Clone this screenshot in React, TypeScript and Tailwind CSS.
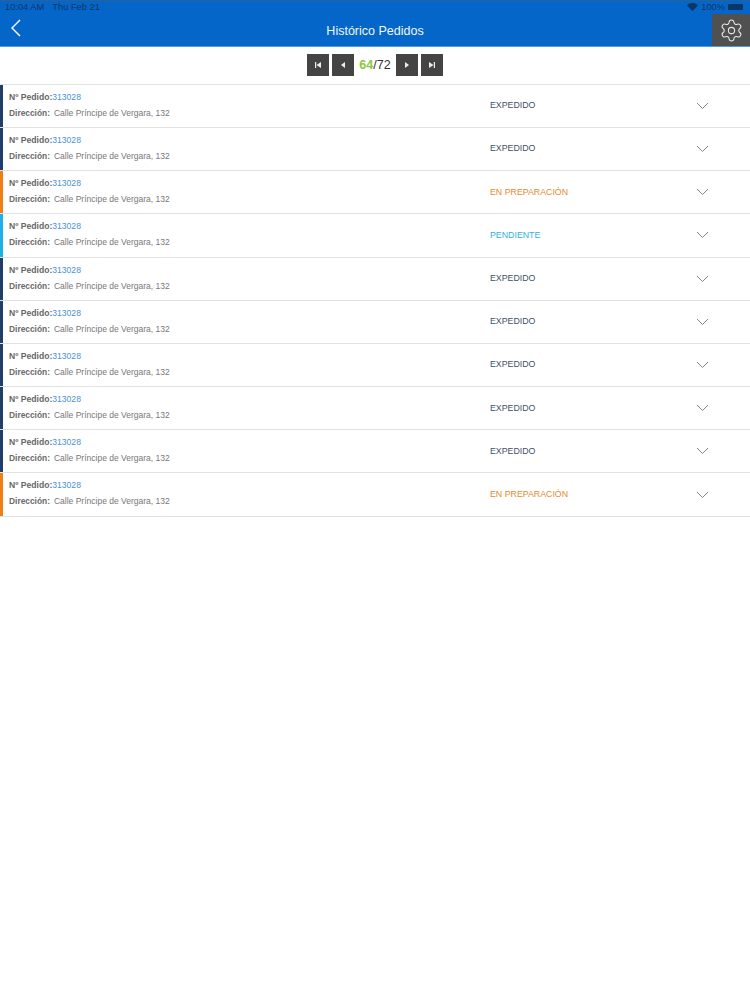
/**
 * Histórico Pedidos — order history list
 */
import React from "react";
import { Settings } from "lucide-react";

const STATUS: Record<string, { bar: string; text: string; label: string }> = {
  sent: { bar: "bg-[#1f3f66]", text: "text-[#3f5168]", label: "EXPEDIDO" },
  prep: { bar: "bg-[#f07f13]", text: "text-[#e58a2e]", label: "EN PREPARACIÓN" },
  wait: { bar: "bg-[#1fb0ea]", text: "text-[#2fb3e0]", label: "PENDIENTE" },
};

const ORDERS = ["sent", "sent", "prep", "wait", "sent", "sent", "sent", "sent", "sent", "prep"];

const PagerButton: React.FC<{ children: React.ReactNode }> = ({ children }) => (
  <div className="w-[22px] h-[22px] bg-[#444444] flex items-center justify-center">
    <svg width="8" height="8" viewBox="0 0 8 8" fill="#eeeeee">
      {children}
    </svg>
  </div>
);

const App: React.FC = () => {
  return (
    <div className="w-[750px] h-[1000px] bg-white font-['Liberation_Sans',sans-serif] overflow-hidden">
      {/* Header */}
      <div className="h-[47px] bg-[#0466c8] border-t border-[#2d5f96] border-b border-b-[#4c9ae6] flex flex-col relative">
        <div className="h-[13px] px-[5px] flex items-center justify-between text-[9.3px] leading-none text-[#0d3566]">
          <div className="flex gap-[8px]">
            <span>10:04 AM</span>
            <span>Thu Feb 21</span>
          </div>
          <div className="flex items-center gap-[3px] pr-[2px]">
            <svg width="11" height="8" viewBox="0 0 11 8" fill="#0d3566">
              <path d="M5.5 8 0 2.4C3.2-.8 7.8-.8 11 2.4L5.5 8Z" />
            </svg>
            <span>100%</span>
            <span className="w-[15px] h-[6px] rounded-[1px] bg-[#0d3566]" />
          </div>
        </div>
        <div className="flex-1 flex items-center justify-center relative">
          <span className="text-[#f2f7fc] text-[12.5px] mt-[3px]">Histórico Pedidos</span>
          <svg className="absolute left-[10px] top-[5px]" width="11" height="18" viewBox="0 0 11 18" fill="none" stroke="white" strokeWidth="1.4">
            <path d="M10 1 2 9l8 8" />
          </svg>
        </div>
        <div className="absolute right-0 top-[13px] w-[38px] h-[32px] bg-[#505050] flex items-center justify-center">
          <Settings size={25} strokeWidth={1} color="#e8e8e8" />
        </div>
      </div>

      {/* Pager */}
      <div className="h-[37.8px] flex items-center justify-center gap-[3px] border-b border-[#e4e4e4]">
        <PagerButton>
          <path d="M1 1h1.2v6H1zM7 1v6L2.5 4z" />
        </PagerButton>
        <PagerButton>
          <path d="M6 1v6L2 4z" />
        </PagerButton>
        <div className="w-[36px] text-center text-[12.5px] text-[#333333]">
          <span className="text-[#8cc63f] font-bold">64</span>/72
        </div>
        <PagerButton>
          <path d="M2 1v6l4-3z" />
        </PagerButton>
        <PagerButton>
          <path d="M1 1v6l4.5-3zM5.8 1H7v6H5.8z" />
        </PagerButton>
      </div>

      {/* Orders */}
      <div>
        {ORDERS.map((key, i) => {
          const s = STATUS[key];
          return (
            <div key={i} className="h-[43.2px] flex border-b border-[#e2e2e2]">
              <div className={`w-[3px] ${s.bar}`} />
              <div className="w-[487px] pl-[6px] pt-[4px] leading-[16px]">
                <div className="text-[8.6px] text-[#666666]">
                  <span className="font-bold">Nº Pedido:</span>
                  <span className="text-[#4a90d9]">313028</span>
                </div>
                <div className="text-[8.4px] text-[#777777]">
                  <span className="font-bold text-[#6a6a6a]">Dirección:</span>
                  <span className="ml-[4px] text-[8.5px]">Calle Príncipe de Vergara, 132</span>
                </div>
              </div>
              <div className={`w-[206px] flex items-center text-[8.8px] ${s.text}`}>{s.label}</div>
              <div className="flex items-center">
                <svg width="13" height="8" viewBox="0 0 13 8" fill="none" stroke="#666666" strokeWidth="0.8">
                  <path d="M1 1l5.5 5.5L12 1" />
                </svg>
              </div>
            </div>
          );
        })}
      </div>
    </div>
  );
};

export default App;
